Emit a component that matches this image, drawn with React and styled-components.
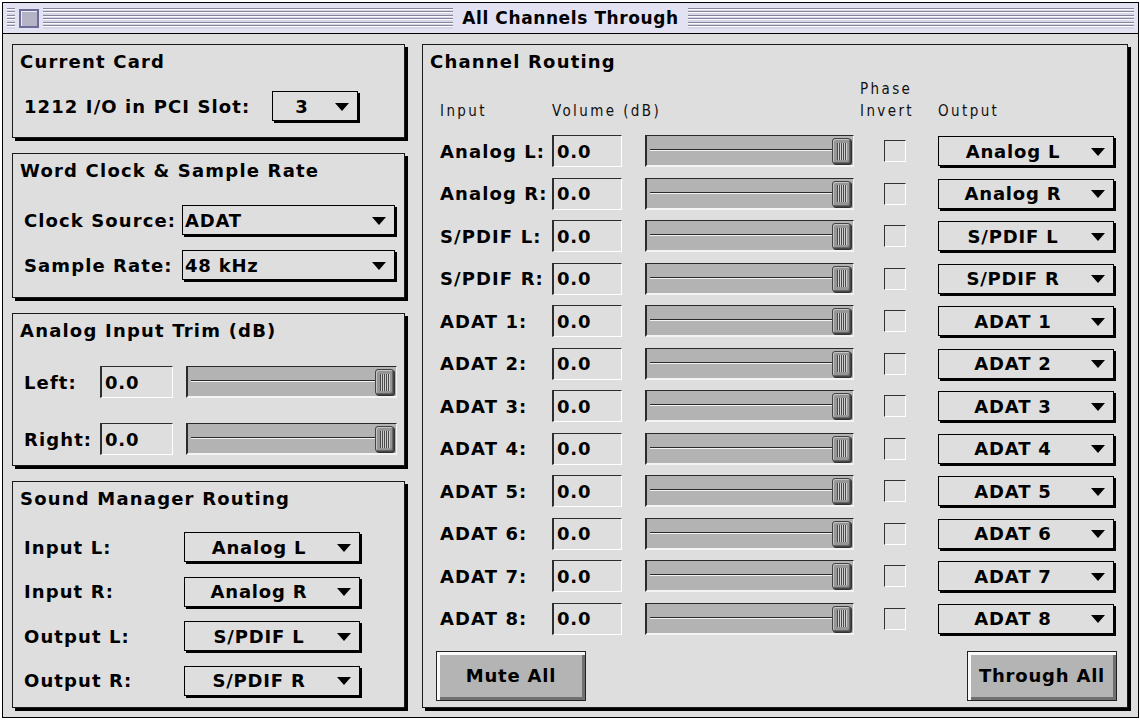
import React from "react";
import styled, { createGlobalStyle } from "styled-components";

const GlobalStyle = createGlobalStyle`
  html, body {
    margin: 0;
    padding: 0;
    background: #ffffff;
  }
  body {
    font-family: "DejaVu Sans", "Liberation Sans", sans-serif;
    color: #000;
  }
`;

const Window = styled.div`
  box-sizing: border-box;
  margin: 2px 0 0 2px;
  width: 1137px;
  height: 716px;
  border: 1px solid #000;
  background: #dedede;
  display: flex;
  flex-direction: column;
`;

const TitleBar = styled.div`
  box-sizing: border-box;
  height: 31px;
  border-bottom: 1px solid #000;
  background: #e2e2f2;
  display: grid;
  grid-template-columns: 1fr auto 1fr;
  align-items: center;
  padding: 0 4px;
`;

const TitleSide = styled.div`
  display: flex;
  align-items: center;
  gap: 4px;
`;

const Stripes = styled.div`
  flex: ${(p) => (p.$w ? `0 0 ${p.$w}px` : "1")};
  height: 21px;
  background: repeating-linear-gradient(
    to bottom,
    #85859e 0 1px,
    #fbfbff 1px 2px,
    #d6d6e6 2px 3.5px
  );
`;

const CloseBox = styled.div`
  box-sizing: border-box;
  width: 20px;
  height: 19px;
  border: 2px solid #6c6c98;
  background: #b4b4c6;
  box-shadow: inset 1px 1px 0 #ececf6;
`;

const TitleText = styled.div`
  padding: 0 9px;
  font-size: 17px;
  font-weight: bold;
  letter-spacing: 0.6px;
  line-height: 20px;
`;

const Content = styled.div`
  flex: 1;
  display: flex;
  align-items: flex-start;
  gap: 17px;
  padding: 10px 0 0 9px;
`;

const LeftColumn = styled.div`
  width: 393px;
  display: flex;
  flex-direction: column;
  gap: 15px;
`;

const Panel = styled.section`
  box-sizing: border-box;
  width: ${(p) => p.$w}px;
  height: ${(p) => p.$h}px;
  border: 1px solid #1a1a1a;
  box-shadow: 3px 3px 0 #000;
  padding: 5px 7px 0;
  display: flex;
  flex-direction: column;
`;

const PanelTitle = styled.h2`
  margin: 0;
  font-size: 18px;
  font-weight: bold;
  letter-spacing: 1.2px;
  line-height: 24px;
`;

const FormGrid = styled.div`
  display: grid;
  grid-template-columns: ${(p) => p.$cols};
  align-items: center;
  row-gap: ${(p) => p.$gap}px;
  margin: ${(p) => p.$top}px 0 0 4px;
`;

const Label = styled.span`
  font-size: 18px;
  font-weight: bold;
  letter-spacing: 1.1px;
  white-space: nowrap;
`;

const PopupBox = styled.div`
  box-sizing: border-box;
  width: ${(p) => p.$w}px;
  height: 30px;
  border: 1px solid #000;
  box-shadow: 2px 2px 0 #000;
  display: flex;
  align-items: center;
  padding-left: ${(p) => (p.$left ? 2 : 0)}px;
`;

const PopupValue = styled.span`
  flex: 1;
  text-align: ${(p) => (p.$left ? "left" : "center")};
  font-size: 18px;
  font-weight: bold;
  letter-spacing: 0.8px;
  white-space: nowrap;
`;

const PopupArrow = styled.span`
  width: 0;
  height: 0;
  border-left: 7px solid transparent;
  border-right: 7px solid transparent;
  border-top: 8px solid #000;
  margin: 1px 8px 0 4px;
`;

const Popup = ({ value, width, left }) => (
  <PopupBox $w={width} $left={left}>
    <PopupValue $left={left}>{value}</PopupValue>
    <PopupArrow />
  </PopupBox>
);

const EditField = styled.div`
  box-sizing: border-box;
  width: ${(p) => p.$w}px;
  height: 32px;
  border-top: 1px solid #2e2e2e;
  border-left: 2px solid #2e2e2e;
  border-right: 1px solid #ffffff;
  border-bottom: 1px solid #ffffff;
  padding-left: 3px;
  display: flex;
  align-items: center;
  font-size: 18px;
  font-weight: bold;
  letter-spacing: 0.8px;
`;

const Track = styled.div`
  position: relative;
  box-sizing: border-box;
  width: ${(p) => p.$w}px;
  height: 32px;
  background: #b3b3b3;
  border-top: 1px solid #2a2a2a;
  border-left: 2px solid #2a2a2a;
  border-right: 1px solid #f4f4f4;
  border-bottom: 2px solid #f4f4f4;
`;

const Groove = styled.div`
  position: absolute;
  left: 3px;
  right: 20px;
  top: 13px;
  height: 1px;
  background: #2a2a2a;
  box-shadow: 0 1px 0 #f2f2f2;
`;

const Thumb = styled.div`
  position: absolute;
  right: 2px;
  top: 2px;
  box-sizing: border-box;
  width: 19px;
  height: 26px;
  border-radius: 3px;
  background: #969696;
  border: 1px solid #444;
  box-shadow: inset 1px 1px 0 #c4c4c4, inset -1px -1px 0 #666, 1px 1px 0 #333;
  display: flex;
  align-items: center;
  justify-content: center;
`;

const Grip = styled.div`
  width: 10px;
  height: 17px;
  background: repeating-linear-gradient(
    to right,
    #4a4a4a 0 1px,
    #d0d0d0 1px 2px
  );
`;

const Slider = ({ width }) => (
  <Track $w={width}>
    <Groove />
    <Thumb>
      <Grip />
    </Thumb>
  </Track>
);

const CheckBox = styled.div`
  box-sizing: border-box;
  width: 22px;
  height: 22px;
  border-top: 1px solid #333;
  border-left: 1px solid #333;
  border-right: 1px solid #ffffff;
  border-bottom: 1px solid #ffffff;
`;

const SliderCell = styled.div`
  display: flex;
  align-items: center;
  gap: 13px;
`;

const channelCols = "112px 93px 239px 54px 176px";

const ChannelHeader = styled.div`
  display: grid;
  grid-template-columns: ${channelCols};
  align-items: end;
  margin: 4px 0 0 10px;
`;

const HeadCell = styled.span`
  font-family: "DejaVu Sans Condensed", "DejaVu Sans", sans-serif;
  font-size: 15px;
  line-height: 22px;
  letter-spacing: 2.4px;
  color: #111;
  margin-left: ${(p) => p.$shift || 0}px;
  white-space: nowrap;
`;

const ChannelGrid = styled.div`
  display: grid;
  grid-template-columns: ${channelCols};
  grid-auto-rows: 32px;
  row-gap: 10.5px;
  align-items: center;
  margin: 13px 0 0 10px;
`;

const CheckCell = styled.div`
  display: flex;
  align-items: center;
`;

const ButtonRow = styled.div`
  display: flex;
  justify-content: space-between;
  margin: 16px 3px 0 6px;
`;

const PushButton = styled.button`
  box-sizing: border-box;
  width: ${(p) => p.$w}px;
  height: 50px;
  background: #b4b4b4;
  border: 1px solid #222;
  box-shadow: inset 3px 3px 0 #fafafa, inset -3px -3px 0 #707070;
  font-family: "DejaVu Sans", sans-serif;
  font-size: 18px;
  font-weight: bold;
  letter-spacing: 0.8px;
  color: #000;
  padding: 0;
`;

const channels = [
  ["Analog L:", "Analog L"],
  ["Analog R:", "Analog R"],
  ["S/PDIF L:", "S/PDIF L"],
  ["S/PDIF R:", "S/PDIF R"],
  ["ADAT 1:", "ADAT 1"],
  ["ADAT 2:", "ADAT 2"],
  ["ADAT 3:", "ADAT 3"],
  ["ADAT 4:", "ADAT 4"],
  ["ADAT 5:", "ADAT 5"],
  ["ADAT 6:", "ADAT 6"],
  ["ADAT 7:", "ADAT 7"],
  ["ADAT 8:", "ADAT 8"],
];

const soundRoutes = [
  ["Input L:", "Analog L"],
  ["Input R:", "Analog R"],
  ["Output L:", "S/PDIF L"],
  ["Output R:", "S/PDIF R"],
];

export default function App() {
  return (
    <>
      <GlobalStyle />
      <Window>
        <TitleBar>
          <TitleSide>
            <Stripes $w={8} />
            <CloseBox />
            <Stripes />
          </TitleSide>
          <TitleText>All Channels Through</TitleText>
          <TitleSide>
            <Stripes />
          </TitleSide>
        </TitleBar>

        <Content>
          <LeftColumn>
            <Panel $w={393} $h={94}>
              <PanelTitle>Current Card</PanelTitle>
              <FormGrid $cols="248px 86px" $gap={0} $top={17}>
                <Label>1212 I/O in PCI Slot:</Label>
                <Popup value="3" width={86} />
              </FormGrid>
            </Panel>

            <Panel $w={393} $h={145}>
              <PanelTitle>Word Clock &amp; Sample Rate</PanelTitle>
              <FormGrid $cols="158px 213px" $gap={15} $top={22}>
                <Label>Clock Source:</Label>
                <Popup value="ADAT" width={213} left />
                <Label>Sample Rate:</Label>
                <Popup value="48 kHz" width={213} left />
              </FormGrid>
            </Panel>

            <Panel $w={393} $h={153}>
              <PanelTitle>Analog Input Trim (dB)</PanelTitle>
              <FormGrid $cols="76px auto" $gap={25} $top={23}>
                <Label>Left:</Label>
                <SliderCell>
                  <EditField $w={73}>0.0</EditField>
                  <Slider width={211} />
                </SliderCell>
                <Label>Right:</Label>
                <SliderCell>
                  <EditField $w={73}>0.0</EditField>
                  <Slider width={211} />
                </SliderCell>
              </FormGrid>
            </Panel>

            <Panel $w={393} $h={227}>
              <PanelTitle>Sound Manager Routing</PanelTitle>
              <FormGrid $cols="160px 176px" $gap={14.5} $top={21}>
                {soundRoutes.map(([label, value]) => (
                  <React.Fragment key={label}>
                    <Label>{label}</Label>
                    <Popup value={value} width={176} />
                  </React.Fragment>
                ))}
              </FormGrid>
            </Panel>
          </LeftColumn>

          <Panel $w={706} $h={664}>
            <PanelTitle>Channel Routing</PanelTitle>
            <ChannelHeader>
              <HeadCell>Input</HeadCell>
              <HeadCell>Volume (dB)</HeadCell>
              <span />
              <HeadCell $shift={-24}>
                Phase
                <br />
                Invert
              </HeadCell>
              <HeadCell>Output</HeadCell>
            </ChannelHeader>
            <ChannelGrid>
              {channels.map(([label, output]) => (
                <React.Fragment key={label}>
                  <Label>{label}</Label>
                  <EditField $w={70}>0.0</EditField>
                  <Slider width={209} />
                  <CheckCell>
                    <CheckBox />
                  </CheckCell>
                  <Popup value={output} width={176} />
                </React.Fragment>
              ))}
            </ChannelGrid>
            <ButtonRow>
              <PushButton $w={150}>Mute All</PushButton>
              <PushButton $w={150}>Through All</PushButton>
            </ButtonRow>
          </Panel>
        </Content>
      </Window>
    </>
  );
}
